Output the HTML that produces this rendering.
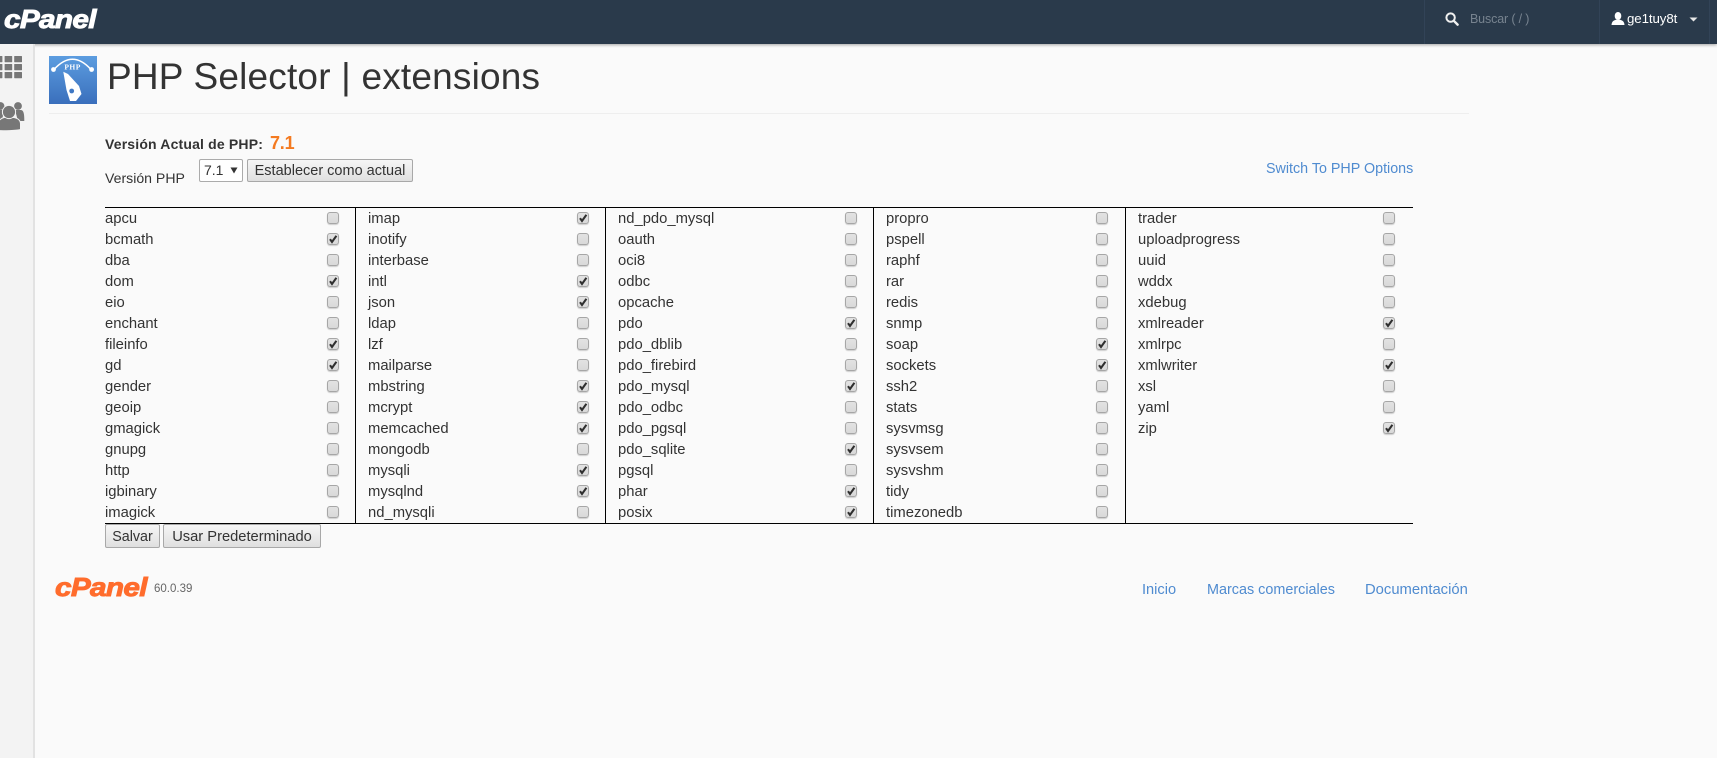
<!DOCTYPE html>
<html lang="es"><head><meta charset="utf-8"><title>PHP Selector | extensions</title>
<style>
html,body{margin:0;padding:0;width:1717px;height:758px;overflow:hidden;background:#fafafa;font-family:"Liberation Sans",sans-serif;font-size:15px;color:#333}
.a{position:absolute;white-space:nowrap}
#top{left:0;top:0;width:1717px;height:44px;background:#2a3a4b;box-shadow:0 1px 3px rgba(0,0,0,.35)}
#side{left:0;top:44px;width:33px;height:714px;background:#f3f3f3;border-right:2px solid #e2e2e2;overflow:hidden}
.sep{top:0;width:1px;height:44px;background:#324357}
.logo{font-weight:bold;font-style:italic;font-size:26px;line-height:26px;letter-spacing:-.6px;-webkit-text-stroke:.9px currentColor;transform:scaleX(1.145);transform-origin:0 0}
.col{position:absolute;top:208px;font-size:14.8px}
.col div{position:relative;height:21px;line-height:23px;white-space:nowrap}
.col i{position:absolute;left:var(--x);top:4px;width:10px;height:10px;border:1px solid #a6a6a6;border-radius:3px;background:linear-gradient(#e2e2e2,#d9d9d9);box-shadow:0 1px 1px rgba(0,0,0,.18)}
.col svg{position:absolute;left:0;top:0;width:10px;height:10px}
.vl{top:207px;width:1px;height:316px;background:#000}
.hl{left:105px;width:1308px;height:1px;background:#000}
.btn{box-sizing:border-box;text-align:center;background:linear-gradient(#f6f6f6,#dfdfdf);border:1px solid #a8a8a8;border-radius:2px;color:#333}
.lnk{color:#4f8bd0}
</style></head><body>
<svg width="0" height="0" style="position:absolute"><defs><path id="ck" d="M2 5.2L4 8L8.4 1.8" fill="none" stroke="#2f2f2f" stroke-width="2.1"/></defs></svg>

<div class="a" id="top"></div>
<div class="a logo" style="left:4px;top:6px;color:#fff">cPanel</div>
<div class="a sep" style="left:1424px"></div>
<div class="a sep" style="left:1599px"></div>
<div class="a sep" style="left:1709px"></div>
<svg class="a" style="left:1445px;top:12px" width="14" height="14" viewBox="0 0 14 14"><circle cx="5.6" cy="5.6" r="4.2" fill="none" stroke="#f0f0f0" stroke-width="2"/><path d="M8.8 8.8L12.6 12.6" stroke="#f0f0f0" stroke-width="2.4" stroke-linecap="round"/></svg>
<div class="a" style="left:1470px;top:10px;line-height:18px;font-size:12.5px;color:#77838f;letter-spacing:-.15px">Buscar ( / )</div>
<svg class="a" style="left:1611px;top:12px" width="14" height="13" viewBox="0 0 14 13"><ellipse cx="7" cy="4" rx="3.3" ry="4" fill="#fff"/><path d="M0.5 13C0.8 9.5 2.6 8.4 5 7.8H9C11.4 8.4 13.2 9.5 13.5 13Z" fill="#fff"/></svg>
<div class="a" style="left:1627px;top:10px;line-height:18px;font-size:13.3px;color:#fff;letter-spacing:-.1px">ge1tuy8t</div>
<svg class="a" style="left:1689px;top:17px" width="9" height="5"><path d="M0.5 0.5H8.5L4.5 4.5Z" fill="#e8e8e8"/></svg>

<div class="a" id="side">
<svg class="a" style="left:0;top:0" width="33" height="90" viewBox="0 0 33 90" fill="#777">
<rect x="-5" y="12" width="7.4" height="6.2" rx=".6"/><rect x="4.6" y="12" width="7.6" height="6.2" rx=".6"/><rect x="14.2" y="12" width="7.8" height="6.2" rx=".6"/>
<rect x="-5" y="20" width="7.4" height="6.2" rx=".6"/><rect x="4.6" y="20" width="7.6" height="6.2" rx=".6"/><rect x="14.2" y="20" width="7.8" height="6.2" rx=".6"/>
<rect x="-5" y="28" width="7.4" height="6.2" rx=".6"/><rect x="4.6" y="28" width="7.6" height="6.2" rx=".6"/><rect x="14.2" y="28" width="7.8" height="6.2" rx=".6"/>
<circle cx="18" cy="62" r="3.9"/><circle cx="0.5" cy="62" r="3.9"/>
<path d="M15 66H21C23.5 66.5 24.3 69 24.3 77H18Z"/>
<path d="M-3 66H4L2 77H-3Z"/>
<path d="M-2 86.5V80C-2 76.5 1 74.3 4 73.5H14C18 74.3 20.5 76.5 20.5 80V85.5C17 86.5 3 87 -2 86.5Z" stroke="#f3f3f3" stroke-width="1"/>
<circle cx="9" cy="68" r="6.6" stroke="#f3f3f3" stroke-width="1"/>
</svg>
</div>

<svg class="a" style="left:49px;top:56px" width="48" height="48" viewBox="0 0 48 48">
<defs><linearGradient id="g" x1="0" y1="0" x2="0" y2="1"><stop offset="0" stop-color="#5c9de0"/><stop offset="1" stop-color="#3a6fbc"/></linearGradient></defs>
<rect width="48" height="48" fill="url(#g)"/>
<path d="M5 13.5Q23.5 -7 42 13.5" fill="none" stroke="#fff" stroke-width="1.5"/>
<circle cx="4.5" cy="13.5" r="2.4" fill="#fff"/><circle cx="42.6" cy="13.5" r="2.4" fill="#fff"/>
<text x="23.6" y="13.5" text-anchor="middle" font-family="Liberation Serif,serif" font-weight="bold" font-size="7.5" letter-spacing=".5" fill="#fff">PHP</text>
<path d="M14.3 15.7L19 18L30 30L32.5 38L27 45L21 45L17.5 34Z" fill="#fff"/>
<circle cx="22.7" cy="35" r="2.4" fill="#3f78c4"/>
</svg>

<div class="a" style="left:107px;top:56px;font-size:37px;line-height:42px;letter-spacing:.19px;color:#333">PHP Selector | extensions</div>
<div class="a" style="left:49px;top:113px;width:1420px;height:1px;background:#eee"></div>

<div class="a" style="left:105px;top:135px;line-height:18px;font-size:14px;font-weight:bold;letter-spacing:.17px;color:#333">Versión Actual de PHP:</div>
<div class="a" style="left:270px;top:132px;line-height:22px;font-size:18px;font-weight:bold;color:#f47a20;letter-spacing:-.2px">7.1</div>
<div class="a" style="left:105px;top:169px;line-height:18px;font-size:14.1px">Versión PHP</div>
<div class="a" style="left:199px;top:159px;width:42px;height:21px;background:#fff;border:1px solid #ababab;border-radius:2px"></div>
<div class="a" style="left:204px;top:160px;line-height:20px;font-size:14px">7.1</div>
<svg class="a" style="left:230px;top:167px" width="8" height="7"><path d="M0.5 0.5H7.5L4 6.5Z" fill="#333"/></svg>
<div class="a btn" style="left:247px;top:159px;width:166px;height:23px;line-height:22px;font-size:14.5px">Establecer como actual</div>
<div class="a lnk" style="left:1266px;top:160px;line-height:18px;font-size:14.3px">Switch To PHP Options</div>

<div class="a hl" style="top:207px"></div>
<div class="a hl" style="top:523px"></div>
<div class="a vl" style="left:355px"></div>
<div class="a vl" style="left:605px"></div>
<div class="a vl" style="left:873px"></div>
<div class="a vl" style="left:1125px"></div>

<div class="col" style="left:105px;--x:222px">
<div>apcu<i></i></div>
<div>bcmath<i><svg viewBox="0 0 10 10"><use href="#ck"/></svg></i></div>
<div>dba<i></i></div>
<div>dom<i><svg viewBox="0 0 10 10"><use href="#ck"/></svg></i></div>
<div>eio<i></i></div>
<div>enchant<i></i></div>
<div>fileinfo<i><svg viewBox="0 0 10 10"><use href="#ck"/></svg></i></div>
<div>gd<i><svg viewBox="0 0 10 10"><use href="#ck"/></svg></i></div>
<div>gender<i></i></div>
<div>geoip<i></i></div>
<div>gmagick<i></i></div>
<div>gnupg<i></i></div>
<div>http<i></i></div>
<div>igbinary<i></i></div>
<div>imagick<i></i></div>
</div>
<div class="col" style="left:368px;--x:209px">
<div>imap<i><svg viewBox="0 0 10 10"><use href="#ck"/></svg></i></div>
<div>inotify<i></i></div>
<div>interbase<i></i></div>
<div>intl<i><svg viewBox="0 0 10 10"><use href="#ck"/></svg></i></div>
<div>json<i><svg viewBox="0 0 10 10"><use href="#ck"/></svg></i></div>
<div>ldap<i></i></div>
<div>lzf<i></i></div>
<div>mailparse<i></i></div>
<div>mbstring<i><svg viewBox="0 0 10 10"><use href="#ck"/></svg></i></div>
<div>mcrypt<i><svg viewBox="0 0 10 10"><use href="#ck"/></svg></i></div>
<div>memcached<i><svg viewBox="0 0 10 10"><use href="#ck"/></svg></i></div>
<div>mongodb<i></i></div>
<div>mysqli<i><svg viewBox="0 0 10 10"><use href="#ck"/></svg></i></div>
<div>mysqlnd<i><svg viewBox="0 0 10 10"><use href="#ck"/></svg></i></div>
<div>nd_mysqli<i></i></div>
</div>
<div class="col" style="left:618px;--x:227px">
<div>nd_pdo_mysql<i></i></div>
<div>oauth<i></i></div>
<div>oci8<i></i></div>
<div>odbc<i></i></div>
<div>opcache<i></i></div>
<div>pdo<i><svg viewBox="0 0 10 10"><use href="#ck"/></svg></i></div>
<div>pdo_dblib<i></i></div>
<div>pdo_firebird<i></i></div>
<div>pdo_mysql<i><svg viewBox="0 0 10 10"><use href="#ck"/></svg></i></div>
<div>pdo_odbc<i></i></div>
<div>pdo_pgsql<i></i></div>
<div>pdo_sqlite<i><svg viewBox="0 0 10 10"><use href="#ck"/></svg></i></div>
<div>pgsql<i></i></div>
<div>phar<i><svg viewBox="0 0 10 10"><use href="#ck"/></svg></i></div>
<div>posix<i><svg viewBox="0 0 10 10"><use href="#ck"/></svg></i></div>
</div>
<div class="col" style="left:886px;--x:210px">
<div>propro<i></i></div>
<div>pspell<i></i></div>
<div>raphf<i></i></div>
<div>rar<i></i></div>
<div>redis<i></i></div>
<div>snmp<i></i></div>
<div>soap<i><svg viewBox="0 0 10 10"><use href="#ck"/></svg></i></div>
<div>sockets<i><svg viewBox="0 0 10 10"><use href="#ck"/></svg></i></div>
<div>ssh2<i></i></div>
<div>stats<i></i></div>
<div>sysvmsg<i></i></div>
<div>sysvsem<i></i></div>
<div>sysvshm<i></i></div>
<div>tidy<i></i></div>
<div>timezonedb<i></i></div>
</div>
<div class="col" style="left:1138px;--x:245px">
<div>trader<i></i></div>
<div>uploadprogress<i></i></div>
<div>uuid<i></i></div>
<div>wddx<i></i></div>
<div>xdebug<i></i></div>
<div>xmlreader<i><svg viewBox="0 0 10 10"><use href="#ck"/></svg></i></div>
<div>xmlrpc<i></i></div>
<div>xmlwriter<i><svg viewBox="0 0 10 10"><use href="#ck"/></svg></i></div>
<div>xsl<i></i></div>
<div>yaml<i></i></div>
<div>zip<i><svg viewBox="0 0 10 10"><use href="#ck"/></svg></i></div>
</div>

<div class="a btn" style="left:105px;top:524px;width:55px;height:24px;line-height:25px;font-size:14.3px">Salvar</div>
<div class="a btn" style="left:163px;top:524px;width:158px;height:24px;line-height:25px;font-size:14.7px">Usar Predeterminado</div>

<div class="a logo" style="left:55px;top:574px;color:#ff6c2c">cPanel</div>
<div class="a" style="left:154px;top:580px;line-height:18px;font-size:11.5px;color:#666">60.0.39</div>
<div class="a lnk" style="left:1142px;top:581px;line-height:18px;font-size:14.6px">Inicio</div>
<div class="a lnk" style="left:1207px;top:581px;line-height:18px;font-size:14.4px">Marcas comerciales</div>
<div class="a lnk" style="left:1365px;top:581px;line-height:18px;font-size:14.8px">Documentación</div>
</body></html>
